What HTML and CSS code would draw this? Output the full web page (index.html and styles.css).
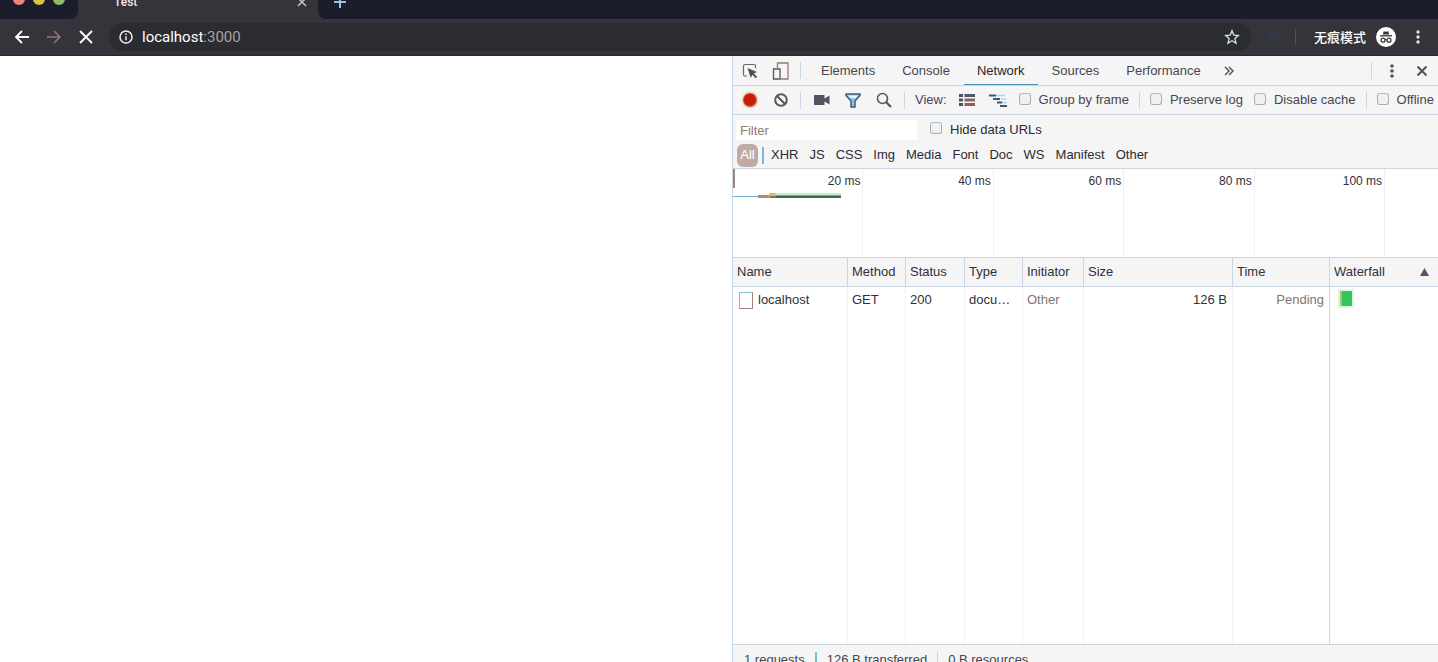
FILE: index.html
```
<!DOCTYPE html>
<html lang="zh-CN">
<head>
<meta charset="utf-8">
<title>Test</title>
<link rel="stylesheet" href="styles.css">
</head>
<body>
<div class="window">
  <header class="tabstrip">
    <div class="lights"><i class="light red"></i><i class="light yellow"></i><i class="light green"></i></div>
    <div class="tab">
      <span class="tab-title">Test</span>
      <button class="plain tab-close" aria-label="Close tab"><svg width="10" height="10" viewBox="0 0 10 10" fill="none" stroke="#c0bfc6" stroke-width="1.6"><path d="M1 1l8 8M9 1L1 9"/></svg></button>
    </div>
    <div class="strip-rest"><button class="plain new-tab" aria-label="New tab"><svg width="12" height="12" viewBox="0 0 12 12" stroke="#8fc6e4" stroke-width="2"><path d="M6 0v12M0 6h12"/></svg></button></div>
  </header>

  <nav class="toolbar">
    <button class="plain nav-btn" aria-label="Back"><svg width="16" height="16" viewBox="0 0 16 16" fill="none" stroke="#fff" stroke-width="1.8"><path d="M15 8H2M8 2L2 8l6 6"/></svg></button>
    <button class="plain nav-btn" aria-label="Forward"><svg width="16" height="16" viewBox="0 0 16 16" fill="none" stroke="#8f7578" stroke-width="1.6"><path d="M1 8h13M8 2l6 6-6 6"/></svg></button>
    <button class="plain nav-btn" aria-label="Stop"><svg width="14" height="14" viewBox="0 0 14 14" fill="none" stroke="#fff" stroke-width="1.9"><path d="M1 1l12 12M13 1L1 13"/></svg></button>
    <div class="omnibox">
      <svg width="14" height="14" viewBox="0 0 14 14" fill="none" stroke="#f0f0f0" stroke-width="1.5"><circle cx="7" cy="7" r="6"/><path d="M7 6.2v4M7 3.6v1.5"/></svg>
      <span class="url">localhost<span class="port">:3000</span></span>
      <button class="plain" aria-label="Bookmark"><svg width="16" height="16" viewBox="0 0 16 16" fill="none" stroke="#dbe4ee" stroke-width="1.3"><path d="M8 1.8l1.8 4.3 4.7.4-3.6 3.1 1.1 4.6L8 11.7l-4 2.5 1.1-4.6-3.6-3.1 4.7-.4z"/></svg></button>
    </div>
    <svg class="extension" width="14" height="12" viewBox="0 0 14 12" fill="none" stroke="#343a52" stroke-width="1.6"><path d="M1 10l2-7h3L4 10M6 3h3L7 10M9 2h4l-2 8M11 5h2"/></svg>
    <i class="nav-sep"></i>
    <span class="incognito">无痕模式</span>
    <svg class="avatar" width="20" height="20" viewBox="0 0 20 20"><circle cx="10" cy="10" r="10" fill="#fff"/><path d="M6.8 7.6L7.7 4.2l2.3.5 2.3-.5.9 3.4z" fill="#34343a"/><path d="M4 8.8h12" stroke="#34343a" stroke-width="1.3"/><g fill="none" stroke="#34343a" stroke-width="1.2"><circle cx="7" cy="13.2" r="2"/><circle cx="13" cy="13.2" r="2"/><path d="M9 12.9q1-.6 2 0"/></g></svg>
    <button class="plain menu" aria-label="Menu"><svg width="4" height="14" viewBox="0 0 4 14" fill="#eee0e2"><circle cx="2" cy="2" r="1.7"/><circle cx="2" cy="7" r="1.7"/><circle cx="2" cy="12" r="1.7"/></svg></button>
  </nav>

  <div class="content">
    <main class="page"></main>
    <section class="devtools">
      <div class="panel-tabs">
        <button class="plain icon" aria-label="Inspect"><svg width="16" height="16" viewBox="0 0 16 16"><path d="M5 13H3q-1.500 0-1.500-1.500V3Q1.500 1.500 3 1.500h9q1.500 0 1.500 1.500v2" fill="none" stroke="#6e6464" stroke-width="1.200"/><path d="M5.500 5l9.500 4-3.300 1.400 3.500 3.400-1.400 1.400-3.500-3.500L8.800 15z" fill="#4d4f5b"/></svg></button>
        <button class="plain icon" aria-label="Device toolbar"><svg width="18" height="18" viewBox="0 0 18 18" fill="none" stroke-width="1.300"><path d="M5.500 6V1H16v16H8.500" stroke="#967c74"/><path d="M1.500 7h6.500v10H1.500z" stroke="#565762"/></svg></button>
        <i class="sep"></i>
        <button class="plain panel-tab first">Elements</button>
        <button class="plain panel-tab">Console</button>
        <button class="plain panel-tab active">Network</button>
        <button class="plain panel-tab">Sources</button>
        <button class="plain panel-tab">Performance</button>
        <button class="plain more" aria-label="More panels"><svg width="10" height="10" viewBox="0 0 10 10" fill="none" stroke="#565762" stroke-width="1.500"><path d="M1 1l4 4-4 4M5 1l4 4-4 4"/></svg></button>
        <i class="sep end"></i>
        <button class="plain kebab" aria-label="Customize"><svg width="4" height="14" viewBox="0 0 4 14" fill="#54555f"><circle cx="2" cy="2" r="1.800"/><circle cx="2" cy="7" r="1.800"/><circle cx="2" cy="12" r="1.800"/></svg></button>
        <button class="plain close" aria-label="Close"><svg width="10" height="10" viewBox="0 0 10 10" fill="none" stroke="#50515b" stroke-width="2"><path d="M.5.5l9 9M9.500.5l-9 9"/></svg></button>
      </div>

      <div class="actions">
        <button class="plain icon" aria-label="Record"><svg width="18" height="18" viewBox="0 0 18 18"><circle cx="9" cy="9" r="8.500" fill="#efd9b4"/><circle cx="9" cy="9" r="7" fill="#b0605a"/><circle cx="8.700" cy="8.700" r="6" fill="#c81a06"/></svg></button>
        <button class="plain icon" aria-label="Clear"><svg width="14" height="14" viewBox="0 0 14 14" fill="none" stroke="#5b5457" stroke-width="2"><circle cx="7" cy="7" r="5.800"/><path d="M3 3l8 8"/></svg></button>
        <i class="sep"></i>
        <button class="plain icon cam" aria-label="Capture screenshots"><svg width="16" height="10" viewBox="0 0 16 10" fill="#54555f"><path d="M0 0h10.500v3.500L15.500.5v9L10.500 6.500V10H0z"/></svg></button>
        <button class="plain icon" aria-label="Filter"><svg width="16" height="15" viewBox="0 0 16 15"><path d="M1 1h14v1.500L10 8v6H6V8L1 2.500z" fill="#8fc3e2" stroke="#3f5f7c" stroke-width="1.500"/><path d="M3 2.500h10L10.500 5h-5z" fill="#eef8fd"/></svg></button>
        <button class="plain icon" aria-label="Search"><svg width="16" height="16" viewBox="0 0 16 16" fill="none" stroke="#5b5457" stroke-width="1.600"><circle cx="6.500" cy="6.500" r="5"/><path d="M10 10l5 5" stroke-width="2.200"/></svg></button>
        <i class="sep view-sep"></i>
        <span class="view">View:</span>
        <button class="plain icon list" aria-label="Large rows"><svg width="16" height="12" viewBox="0 0 16 12"><path d="M0 0h4v3H0zM0 4.500h4v3H0zM0 9h4v3H0z" fill="#4a5260"/><path d="M5.500 0H16v3H5.500z" fill="#4f5863"/><path d="M5.500 4.500H16v3H5.500zM5.500 9H16v3H5.500z" fill="#8d6258"/></svg></button>
        <button class="plain icon" aria-label="Overview"><svg width="18" height="13" viewBox="0 0 18 13" fill="none" stroke-width="2"><path d="M7 1.500h9M12 5h5M13 8.500h5" stroke="#b5cfe2" stroke-width="1.500"/><path d="M0 1.500h7M4 5h7M8 8.500h5M11 12h7" stroke="#3f5873"/></svg></button>
        <label class="check"><input type="checkbox">Group by frame</label>
        <i class="sep"></i>
        <label class="check"><input type="checkbox">Preserve log</label>
        <label class="check"><input type="checkbox">Disable cache</label>
        <i class="sep"></i>
        <label class="check"><input type="checkbox">Offline</label>
      </div>

      <div class="filters">
        <div class="filter-row">
          <input class="filter-input" type="text" placeholder="Filter" aria-label="Filter">
          <label class="check"><input type="checkbox">Hide data URLs</label>
        </div>
        <div class="types">
          <button class="plain all">All</button><i class="type-sep"></i>
          <button class="plain">XHR</button><button class="plain">JS</button><button class="plain">CSS</button><button class="plain">Img</button><button class="plain">Media</button><button class="plain">Font</button><button class="plain">Doc</button><button class="plain">WS</button><button class="plain">Manifest</button><button class="plain">Other</button>
        </div>
      </div>

      <div class="overview">
        <span class="tick">20 ms</span><span class="tick">40 ms</span><span class="tick">60 ms</span><span class="tick">80 ms</span><span class="tick">100 ms</span>
        <i class="handle"></i>
        <svg class="load" width="108" height="6" viewBox="0 0 108 6"><path d="M0 3h26v1H0z" fill="#71b7cb"/><path d="M25 2h12v3H25z" fill="#b08878"/><path d="M36 0h7v5h-7z" fill="#d9bb75"/><path d="M37 3h6v2h-6z" fill="#8d6b49"/><path d="M43 0h65v2H43z" fill="#b9f7c5"/><path d="M43 2h65v3H43z" fill="#55b987"/><path d="M43 3h65v2H43z" fill="#49645f"/></svg>
      </div>

      <div class="requests">
        <table>
          <colgroup><col class="c-name"><col class="c-method"><col class="c-status"><col class="c-type"><col class="c-init"><col class="c-size"><col class="c-time"><col></colgroup>
          <thead><tr><th>Name</th><th>Method</th><th>Status</th><th>Type</th><th>Initiator</th><th>Size</th><th>Time</th><th><span class="sorted">Waterfall <svg width="9" height="8" viewBox="0 0 9 8" fill="#54555f"><path d="M4.500 0L9 8H0z"/></svg></span></th></tr></thead>
          <tbody>
            <tr><td><span class="file"><i class="doc"></i>localhost</span></td><td>GET</td><td>200</td><td>docu…</td><td class="muted">Other</td><td class="num">126 B</td><td class="num muted">Pending</td><td><i class="bar"></i></td></tr>
            <tr class="filler"><td></td><td></td><td></td><td></td><td></td><td></td><td></td><td></td></tr>
          </tbody>
        </table>
      </div>

      <footer class="summary"><span>1 requests</span><i class="blue"></i><span>126 B transferred</span><i></i><span>0 B resources</span></footer>
    </section>
  </div>
</div>
</body>
</html>
```
FILE: styles.css
```
* { box-sizing: border-box; }
body { margin: 0; background: #fff; font: 13px/16px "Liberation Sans", Arial, sans-serif; color: #303038; }
svg { display: block; flex: none; }
.plain { border: 0; padding: 0; margin: 0; background: none; font: inherit; color: inherit; white-space: nowrap; }
.window { height: 100vh; display: flex; flex-direction: column; overflow: hidden; }

/* Browser chrome */
.tabstrip { flex: none; height: 19px; display: flex; background: #34343a; overflow: hidden; }
.lights { width: 78px; background: #1b1c2c; border-bottom-right-radius: 8px; display: flex; gap: 8px; padding-left: 13px; }
.light { width: 12px; height: 12px; border-radius: 50%; margin-top: -7px; }
.red { background: #f5817b; }
.yellow { background: #dcc04a; }
.green { background: #8fba6c; }
.tab { width: 240px; display: flex; justify-content: space-between; align-items: flex-start; padding: 0 11px 0 36px; color: #eceaf0; }
.tab-title { font: 500 12px/16px Roboto, sans-serif; margin-top: -6px; }
.tab-close { margin-top: -3px; }
.strip-rest { flex: 1; background: #1b1c2c; border-bottom-left-radius: 8px; padding-left: 16px; }
.new-tab { display: block; margin-top: -4px; }
.toolbar { flex: none; height: 37px; display: flex; align-items: center; background: #34343a; border-bottom: 1px solid #29292d; padding-left: 6px; }
.nav-btn { width: 32px; display: flex; justify-content: center; }
.omnibox { flex: 1; height: 28px; margin-left: 7px; padding: 0 11px 0 10px; border-radius: 14px; background: #2b2c2f; display: flex; align-items: center; gap: 9px; color: #fff; }
.url { flex: 1; font: 15px/20px Roboto, sans-serif; }
.port { color: #aaa0a1; }
.extension { margin: 0 15px; }
.nav-sep { width: 1px; height: 16px; background: #505261; }
.incognito { margin: 0 10px 0 18px; color: #fff; font: 500 13px/20px "Noto Sans CJK SC", sans-serif; }
.menu { margin: 0 18px 0 20px; }

.content { flex: 1; min-height: 0; display: grid; grid-template-columns: 732fr 706fr; }
.page { background: #fff; }
.devtools { min-width: 0; min-height: 0; display: flex; flex-direction: column; border-left: 1px solid #c6d5e3; }
.panel-tabs, .actions { flex: none; display: flex; align-items: center; background: #f5f5f6; border-bottom: 1px solid #c9d6e4; padding-left: 1px; overflow: hidden; color: #46464f; white-space: nowrap; }
.panel-tabs { height: 30px; }
.actions { height: 29px; }
.icon { width: 31px; flex: none; display: flex; justify-content: center; }
.sep { flex: none; width: 1px; height: 17px; margin-left: 4px; background: #c9d6e4; }
.panel-tab { height: 30px; padding: 2px 13px 0; margin-right: 1px; border-bottom: 2px solid transparent; }
.first { margin-left: 7px; }
.active { border-color: #4393b5; color: #25252d; }
.more { margin-left: 9px; }
.end { margin-left: auto; }
.kebab { margin-left: 18px; }
.close { margin: 0 11px 0 23px; }
.cam { margin-left: 5px; }
.view-sep { margin-left: 5px; }
.view { margin: 0 5px 0 10px; }
.check { flex: none; display: flex; align-items: center; gap: 8px; margin: 0 6px 0 5px; }
.sep + .check { margin-left: 10px; }
.check input { appearance: none; width: 12px; height: 12px; margin: 0 0 3px; border: 1px solid #b5a8a8; border-top-color: #a4bed0; border-radius: 3px; background: #eef1f4; }

/* Request filters */
.filters { flex: none; background: #f5f5f6; border-bottom: 1px solid #c9d6e4; padding: 4px 3px 1px; color: #2b2b33; }
.filter-row { display: flex; align-items: center; height: 21px; }
.filter-input { width: 181px; height: 20px; border: 0; padding: 2px 4px 0; background: #fff; font: inherit; }
.filter-input::placeholder { color: #917773; }
.filter-row .check { margin-left: 13px; }
.types { display: flex; align-items: center; gap: 11px; height: 27px; padding: 3px 0 0 1px; }
.all { width: 21px; height: 23px; margin-right: -7px; border-radius: 6px; background: #c1aaa5; color: #fff; }
.type-sep { width: 2px; height: 17px; margin-right: -4px; background: #79bbd5; }

/* Timeline */
.overview { flex: none; position: relative; display: flex; height: 89px; border-bottom: 1px solid #c9d6e4; background: #fff; }
.tick { width: 18.5%; padding: 4px 2px 0 0; border-right: 1px solid #f0f0f2; text-align: right; font-size: 12px; }
.handle { position: absolute; left: 0; top: 0; width: 2px; height: 19px; background: #a88478; }
.load { position: absolute; left: 0; top: 24px; }

/* Request table */
.requests { flex: 1; min-height: 0; }
table { width: 100%; height: 100%; table-layout: fixed; border-collapse: separate; border-spacing: 0; }
.c-name { width: 115px; }
.c-method, .c-type { width: 58px; }
.c-status { width: 59px; }
.c-init { width: 61px; }
.c-size { width: 149px; }
.c-time { width: 97px; }
th { height: 29px; padding: 0 4px; background: #f5f5f6; border-right: 1px solid #c9d6e4; border-bottom: 1px solid #c9d6e4; font-weight: normal; text-align: left; white-space: nowrap; }
td { height: 26px; padding: 0 4px; border-right: 1px solid #f2f2f4; white-space: nowrap; }
td:nth-child(7) { border-right-color: #c9d6e4; }
th:last-child, td:last-child { border-right: 0; }
.filler td { height: auto; }
.sorted { display: flex; align-items: center; justify-content: space-between; padding-right: 5px; }
.file { display: flex; align-items: center; gap: 5px; padding-left: 2px; }
.doc { width: 14px; height: 17px; border: 1px solid #a98076; border-top-color: #81bfd6; border-left-color: #81bfd6; }
.muted { color: #85736f; }
.num { text-align: right; padding-right: 5px; }
.bar { display: block; width: 12px; height: 15px; margin-left: 6px; margin-bottom: 3px; border-left: 2px solid #b7bd79; background: #35c45b; box-shadow: 0 0 1px 2px #d8fbde; }
.summary { flex: none; height: 18px; overflow: hidden; display: flex; align-items: flex-start; gap: 10px; padding: 7px 0 0 11px; border-top: 1px solid #c9d6e4; background: #f5f5f6; color: #46464f; white-space: nowrap; }
.summary i { width: 1px; height: 14px; background: #c9d6e4; }
.summary .blue { width: 2px; background: #79bbd5; }
```
